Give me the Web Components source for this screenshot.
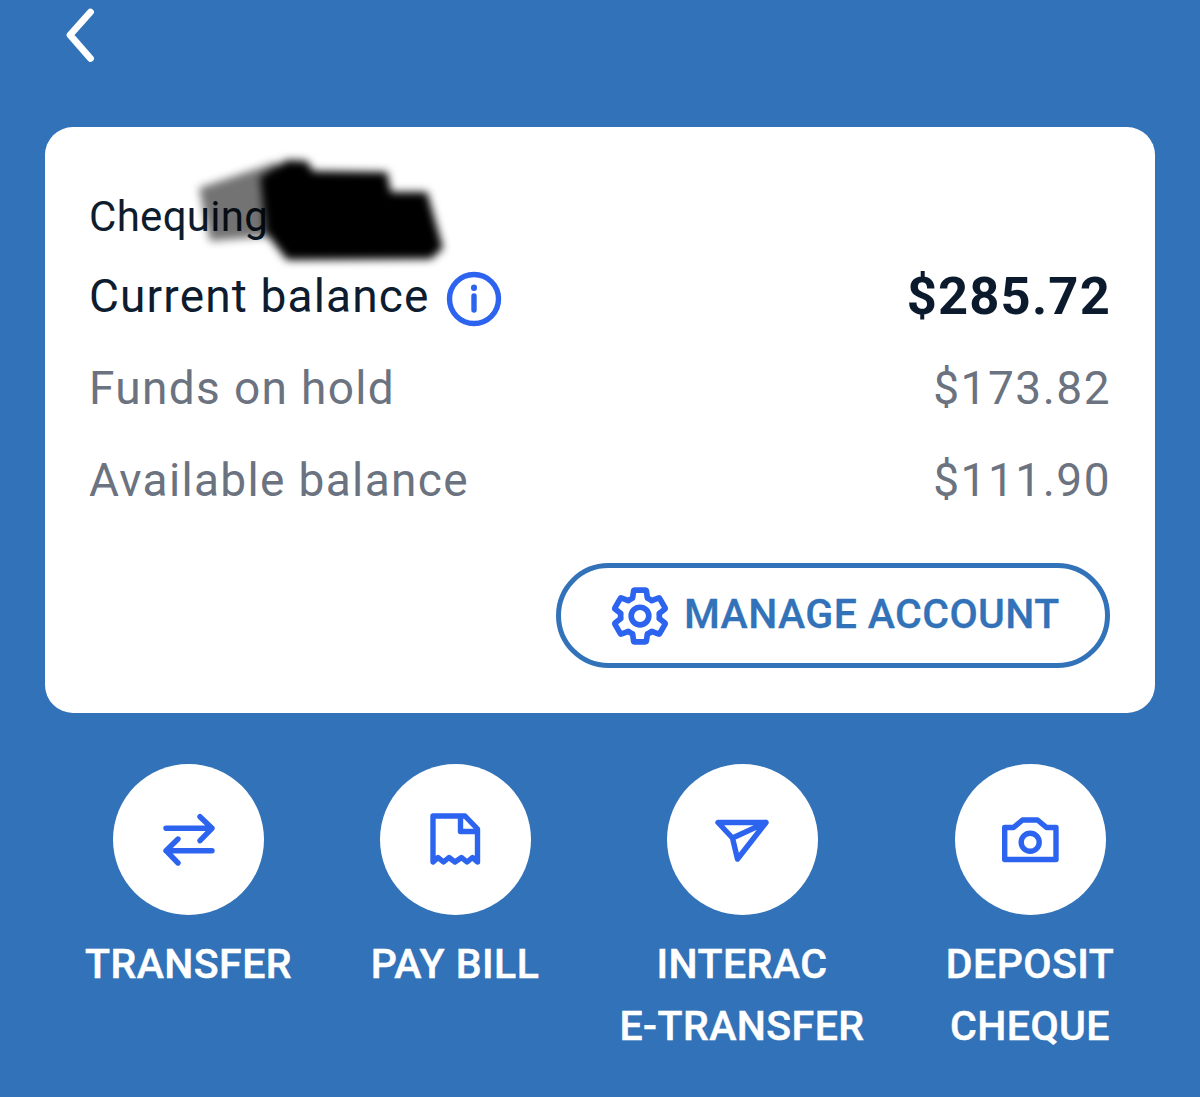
<!DOCTYPE html>
<html lang="en">
<head>
<meta charset="UTF-8">
<title>Account</title>
<style>
    html, body { margin: 0; height: 100%; }
    body { background: #3272b8; font-family: Roboto, "Liberation Sans", sans-serif; overflow: hidden; }
</style>
</head>
<body>
<account-screen>
    <back-bar></back-bar>
    <account-card>
        <span slot="name">Chequing</span>
        <balance-row variant="main" slot="rows" label="Current balance" amount="$285.72" info></balance-row>
        <balance-row slot="rows" label="Funds on hold" amount="$173.82"></balance-row>
        <balance-row slot="rows" label="Available balance" amount="$111.90"></balance-row>
        <manage-button slot="action">MANAGE ACCOUNT</manage-button>
    </account-card>
    <quick-actions>
        <quick-action icon="transfer">TRANSFER</quick-action>
        <quick-action icon="bill">PAY BILL</quick-action>
        <quick-action icon="send">INTERAC<br>E-TRANSFER</quick-action>
        <quick-action icon="camera">DEPOSIT<br>CHEQUE</quick-action>
    </quick-actions>
</account-screen>

<script>
const ICONS = {
    transfer: '<path d="M7 18.3H53M41 6.7 53 18.3 41 30.7M53 40.7H7M19 29 7 40.7 19 53"/>',
    bill: '<path d="M8 6H40L52.5 19V52L47.5 47.5 42 52 36.5 47.5 30 52 24 47.5 18.5 52 13 47.5 8 52ZM35.5 7V21.5H52"/>',
    send: '<path d="M6 12.5H54L25.5 49 20.5 28ZM20.5 28 54 12.5"/>',
    camera: '<path d="M4.7 17.5H13.5L22.5 10H37.5L46.5 17.5H56V49.5H4.7Z"/><circle cx="30.2" cy="32.2" r="9"/>'
};

function define(name, html, setup) {
    customElements.define(name, class extends HTMLElement {
        constructor() {
            super();
            this.attachShadow({mode: 'open'}).innerHTML = html;
            if (setup) setup(this);
        }
    });
}

define('account-screen', `
    <style>:host { display: block; width: 1200px; height: 1097px; }</style>
    <slot></slot>`);

define('back-bar', `
    <style>
        :host { display: block; height: 127px; }
        svg { display: block; margin-left: 60px; fill: none; stroke: #fff; stroke-width: 6.8; stroke-linecap: round; stroke-linejoin: round; }
    </style>
    <svg width="40" height="70" viewBox="0 0 40 70"><path d="M30.5 12 10 35 30.5 58.5"/></svg>`);

define('account-card', `
    <style>
        :host { display: block; box-sizing: border-box; position: relative; width: 1110px; height: 586px; margin-left: 45px;
                padding: 65px 45px 46px 44px; background: #fff; border-radius: 28px; }
        .name { height: 50px; line-height: 50px; font-size: 42px; letter-spacing: .3px; color: #0d1c2e; }
        .rows { margin-top: 8px; }
        .action { display: flex; justify-content: flex-end; margin-top: 37px; }
        svg { position: absolute; left: 0; top: 0; pointer-events: none; }
    </style>
    <div class="name"><slot name="name"></slot></div>
    <div class="rows"><slot name="rows"></slot></div>
    <div class="action"><slot name="action"></slot></div>
    <svg width="500" height="150" viewBox="45 127 500 150">
        <defs><filter id="smudge" x="-10%" y="-10%" width="120%" height="120%"><feGaussianBlur stdDeviation="4"/></filter></defs>
        <g filter="url(#smudge)">
            <path d="M199 188 277 162 285 235 210 241Z" fill="#000" fill-opacity=".55"/>
            <path d="M260 177 287 160 307 161 313 171 387 172 391 192 427 192 443 248 431 259 287 260 266 233Z" fill="#000"/>
        </g>
    </svg>`);

define('balance-row', `
    <style>
        :host { display: flex; align-items: center; justify-content: space-between; height: 92px; font-size: 46px; letter-spacing: 1.35px; color: #6b7280; }
        :host([variant="main"]) { letter-spacing: 1.15px; color: #0d1c2e; }
        :host([variant="main"]) .amount { font-size: 52.5px; font-weight: 700; letter-spacing: 1.2px; color: #0b1a2c; }
        .amount { margin-right: -1px; letter-spacing: 1.5px; }
        .label { display: flex; align-items: center; gap: 16px; }
        svg { display: block; margin-top: 5px; fill: none; stroke: #2c64f0; stroke-width: 5.4; stroke-linecap: round; }
    </style>
    <span class="label"><span class="text"></span></span><span class="amount"></span>`, el => {
    const root = el.shadowRoot;
    root.querySelector('.text').textContent = el.getAttribute('label');
    root.querySelector('.amount').textContent = el.getAttribute('amount');
    if (el.hasAttribute('info')) {
        root.querySelector('.label').insertAdjacentHTML('beforeend',
            '<svg width="56" height="56" viewBox="0 0 56 56"><circle cx="28" cy="28" r="24.5"/><path d="M28 25V39"/><path d="M28 16.5V17" stroke-width="6"/></svg>');
    }
});

define('manage-button', `
    <style>
        :host { display: flex; align-items: center; box-sizing: border-box; width: 554px; height: 105px; padding: 0 0 4px 48px; gap: 13px;
                border: 5px solid #3272b8; border-radius: 53px; font-size: 41px; font-weight: 500; letter-spacing: .4px; color: #3272b8; -webkit-text-stroke: .3px #3272b8; }
        svg { display: block; flex: none; margin-top: 4px; fill: none; stroke: #2c64f0; stroke-width: 2.2; stroke-linejoin: round; }
    </style>
    <svg width="62" height="62" viewBox="0 0 24 24">
        <path d="M19.43 12.98c.04-.32.07-.64.07-.98s-.03-.66-.07-.98l2.11-1.65c.19-.15.24-.42.12-.64l-2-3.46c-.12-.22-.39-.3-.61-.22l-2.49 1c-.52-.4-1.08-.73-1.69-.98l-.38-2.65C14.46 2.18 14.25 2 14 2h-4c-.25 0-.46.18-.49.42l-.38 2.65c-.61.25-1.17.59-1.69.98l-2.49-1c-.23-.09-.49 0-.61.22l-2 3.46c-.13.22-.07.49.12.64l2.11 1.65c-.04.32-.07.65-.07.98s.03.66.07.98l-2.11 1.65c-.19.15-.24.42-.12.64l2 3.46c.12.22.39.3.61.22l2.49-1c.52.4 1.08.73 1.69.98l.38 2.65c.03.24.24.42.49.42h4c.25 0 .46-.18.49-.42l.38-2.65c.61-.25 1.17-.59 1.69-.98l2.49 1c.23.09.49 0 .61-.22l2-3.46c.12-.22.07-.49-.12-.64l-2.11-1.65z"/>
        <circle cx="12" cy="12" r="3.4"/>
    </svg>
    <span><slot></slot></span>`);

define('quick-actions', `
    <style>
        :host { display: grid; grid-template-columns: 289px 244px 330px 246px; margin: 51px 0 0 44px; }
    </style>
    <slot></slot>`);

define('quick-action', `
    <style>
        :host { display: flex; flex-direction: column; align-items: center; font-size: 41px; font-weight: 500; letter-spacing: .45px; line-height: 62px; color: #fff; text-align: center; white-space: nowrap; -webkit-text-stroke: .5px #fff; }
        .disc { display: flex; align-items: center; justify-content: center; width: 151px; height: 151px; margin-bottom: 18px; border-radius: 50%; background: #fff; }
        svg { display: block; fill: none; stroke: #2c64f0; stroke-width: 5.4; stroke-linecap: round; stroke-linejoin: round; }
    </style>
    <div class="disc"><svg width="60" height="60" viewBox="0 0 60 60"></svg></div>
    <div><slot></slot></div>`, el => {
    el.shadowRoot.querySelector('svg').innerHTML = ICONS[el.getAttribute('icon')];
});
</script>
</body>
</html>
